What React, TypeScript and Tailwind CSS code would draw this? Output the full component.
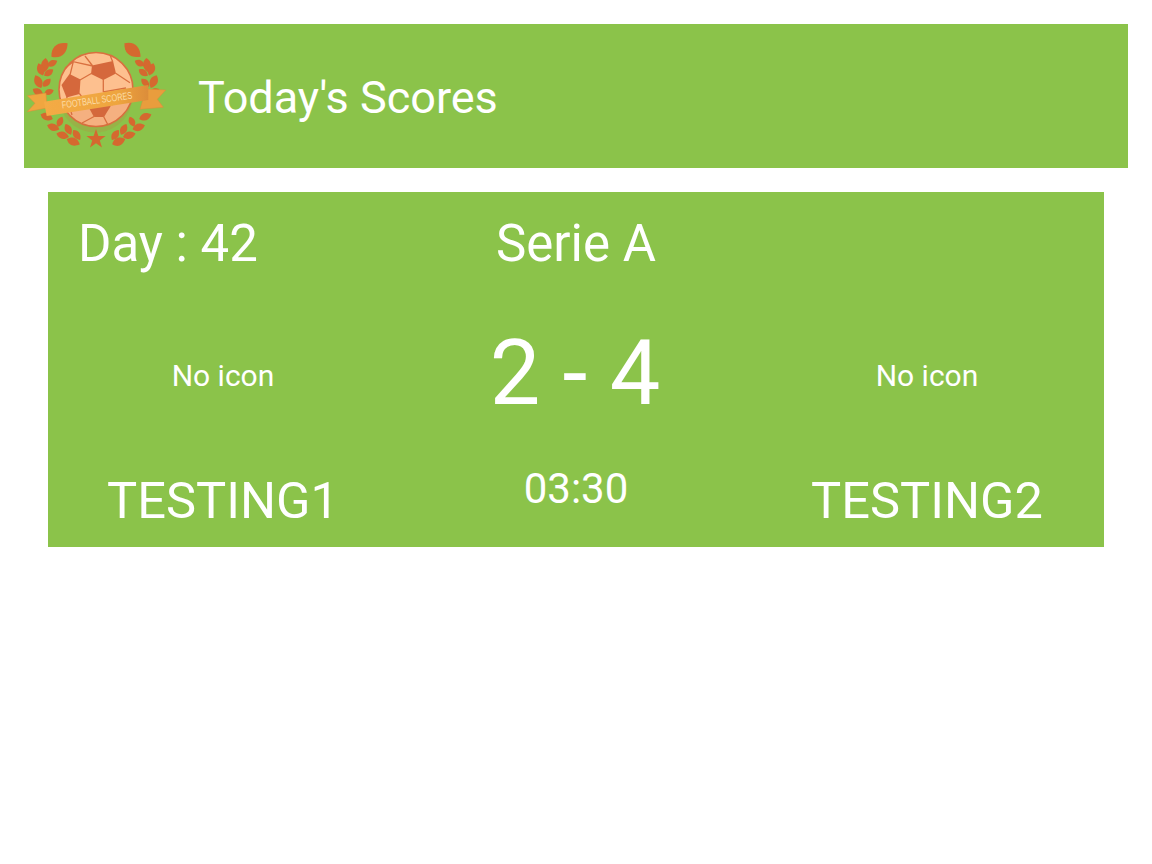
import React from "react";

type L = [number, number, number, number];
const leaves: L[] = [
  [59.5, 50, 10.5, -40], [45, 65, 7, -85], [52.3, 63.3, 5.5, -27], [40.7, 69.3, 6.5, -110], [48.7, 72.7, 5.5, -35],
  [38.3, 81.7, 7, -115], [46.7, 82.7, 5.5, -45], [38, 92, 6, 30], [49, 92, 5, -20],
  [46.7, 116.7, 6.5, 20], [60, 121.7, 5.5, -65], [53.3, 127.3, 6.5, 18], [68.3, 129.3, 6, 63], [62.7, 135.3, 6.5, 15],
  [76.7, 135, 6, 55], [73.3, 141.7, 7, 22],
];

function Leaf({ x, y, l, a }: { x: number; y: number; l: number; a: number }) {
  return (
    <path
      transform={`translate(${x} ${y}) rotate(${a})`}
      d={`M${-l} 0C${-l * 0.4} ${-l * 0.8} ${l * 0.4} ${-l * 0.7} ${l} 0C${l * 0.4} ${l * 0.7} ${-l * 0.4} ${l * 0.8} ${-l} 0Z`}
      fill="#d5682f"
    />
  );
}

function Logo() {
  return (
    <svg viewBox="24 24 144 144" className="w-[144px] h-[144px] shrink-0">
      <defs>
        <linearGradient id="band" x1="0" y1="0" x2="1" y2="0">
          <stop offset="0" stopColor="#f4ab45" />
          <stop offset="0.7" stopColor="#eea53f" />
          <stop offset="1" stopColor="#dc8d3a" />
        </linearGradient>
      </defs>
      {leaves.map(([x, y, l, a], i) => (
        <g key={i}>
          <Leaf x={x} y={y} l={l} a={a} />
          <Leaf x={192 - x} y={y} l={l} a={-a} />
        </g>
      ))}
      <polygon points="96,129 98.4,136 105.5,136 99.8,140.4 102,147.5 96,143.2 90,147.5 92.2,140.4 86.5,136 93.6,136" fill="#d5682f" />
      <circle cx="96" cy="89.5" r="37" fill="#fdc08f" stroke="#d9703f" strokeWidth="1.6" />
      <polygon points="92,65.5 113,61 116,73.5 103.3,80 91,74" fill="#d5683c" />
      <polygon points="61.5,85 69.5,74 80.5,79.5 79.5,94 66.5,97.5" fill="#d5683c" />
      <polygon points="89,108 112,104 104,117 94,117" fill="#d5683c" />
      <g fill="none" stroke="#d9703f" strokeWidth="1.3">
        <path d="M92.7 66L85 56M112.7 61.7L110 55M115.7 73.3L130 82.7M103.3 79L103.3 92M103.3 92L126 88M91.7 73.3L80 80M70 75L73.3 61.7L92.7 66M79.3 93.3L90 108M66.7 96.7L72 115M111.7 105L127 92M103.3 116L108 125M95 116L82 123M73.3 61.7L65 68" />
      </g>
      <path d="M59.5 104A37 37 0 0 0 132.5 97Z" fill="#d5683c" opacity="0.18" />
      <polygon points="27.3,95.7 46,93 47,108 27.3,111.7 35,103.3" fill="#f0a640" stroke="#dc8a3a" strokeWidth="0.5" />
      <polygon points="165.7,90 146,89 140,109.3 163.3,107.3 157.3,99.3" fill="#e99d3d" stroke="#dc8a3a" strokeWidth="0.5" />
      <polygon points="44,101.7 148.3,85 148.3,100 46.7,116" fill="url(#band)" />
      <text
        x="97.5"
        y="103.5"
        textAnchor="middle"
        textLength="71"
        lengthAdjust="spacingAndGlyphs"
        transform="rotate(-8 97.5 103.5)"
        fill="#fcdca6"
        fontSize="10"
        fontFamily="'Liberation Sans', sans-serif"
      >
        FOOTBALL SCORES
      </text>
    </svg>
  );
}

export default function App() {
  return (
    <div className="bg-white min-h-[864px] p-6 text-white font-['Roboto',sans-serif]">
      <header className="h-36 bg-[#8bc34a] flex items-center">
        <Logo />
        <h1 className="ml-[30px] text-[45px] leading-none font-normal pt-[2px]">Today's Scores</h1>
      </header>
      <section className="mx-6 mt-6 h-[355px] bg-[#8bc34a] grid grid-cols-3 grid-rows-[104px_147px_104px]">
        <div className="pl-[30px] pt-[17px] text-[51px] leading-[70px]">Day : 42</div>
        <div className="pt-[17px] text-center text-[51px] leading-[70px]">Serie A</div>
        <div />
        <div className="flex items-center justify-center text-[30px] pt-[11px] pr-[2px]">No icon</div>
        <div className="flex items-center justify-center text-[90px] leading-none pt-[8px] pr-[2px]">2 - 4</div>
        <div className="flex items-center justify-center text-[30px] pt-[11px] pr-[2px]">No icon</div>
        <div className="text-center text-[50.6px] leading-[70px] pt-[23px] pr-[2px]">TESTING1</div>
        <div className="text-center text-[42px] leading-[60px] pt-[16px]">03:30</div>
        <div className="text-center text-[50.6px] leading-[70px] pt-[23px] pr-[2px]">TESTING2</div>
      </section>
    </div>
  );
}
